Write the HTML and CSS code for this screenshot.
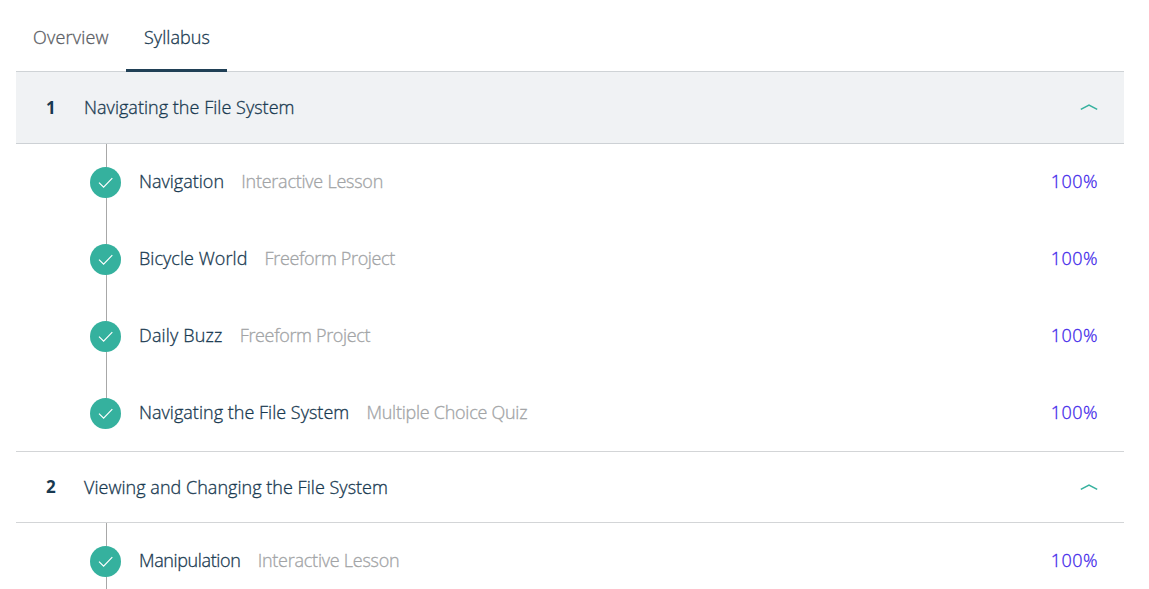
FILE: index.html
```html
<!DOCTYPE html>
<html lang="en">
<head>
<meta charset="utf-8">
<title>Syllabus</title>
<link rel="stylesheet" href="styles.css">
</head>
<body>
<svg class="defs" width="0" height="0">
  <symbol id="check" viewBox="0 0 31 31"><path d="M9 15.600l4.600 4.500 8.700-9"/></symbol>
  <symbol id="chevron" viewBox="0 0 18 8"><path d="M.8 6.300L9 2l8.200 4.300"/></symbol>
</svg>
<main class="page">
  <nav class="tabs">
    <a class="tab tab-overview">Overview</a>
    <a class="tab tab-syllabus active">Syllabus</a>
  </nav>
  <section class="unit">
    <header class="unit-head shaded">
      <span class="num">1</span><h2 class="unit-title">Navigating the File System</h2>
      <svg class="chevron"><use href="#chevron"/></svg>
    </header>
    <ul class="items">
      <li class="item"><svg class="badge"><use href="#check"/></svg><span class="name navigation">Navigation</span><span class="kind lesson">Interactive Lesson</span><span class="pct">100%</span></li>
      <li class="item"><svg class="badge"><use href="#check"/></svg><span class="name bicycle">Bicycle World</span><span class="kind project">Freeform Project</span><span class="pct">100%</span></li>
      <li class="item"><svg class="badge"><use href="#check"/></svg><span class="name buzz">Daily Buzz</span><span class="kind project">Freeform Project</span><span class="pct">100%</span></li>
      <li class="item last"><svg class="badge"><use href="#check"/></svg><span class="name files">Navigating the File System</span><span class="kind quiz">Multiple Choice Quiz</span><span class="pct">100%</span></li>
    </ul>
  </section>
  <section class="unit">
    <header class="unit-head">
      <span class="num">2</span><h2 class="unit-title">Viewing and Changing the File System</h2>
      <svg class="chevron"><use href="#chevron"/></svg>
    </header>
    <ul class="items">
      <li class="item"><svg class="badge"><use href="#check"/></svg><span class="name manipulation">Manipulation</span><span class="kind lesson">Interactive Lesson</span><span class="pct">100%</span></li>
    </ul>
  </section>
</main>
</body>
</html>
```

FILE: styles.css
```css
* { box-sizing: border-box; }
html { overflow: hidden; }
body {
  margin: 0;
  height: 589px;
  overflow: hidden;
  background: #fff;
  color: #183950;
  font: 300 18px/24px "Open Sans", "Noto Sans", sans-serif;
  white-space: nowrap;
  -webkit-text-stroke: .3px currentColor;
}
.defs { display: block; }
.page { width: 1108px; margin-left: 16px; }
.tabs {
  display: flex;
  height: 72px;
  border-bottom: 1px solid #cfd3d6;
}
.tab { height: 72px; padding-top: 25px; color: #5c6065; }
.tab-overview { width: 110px; padding-left: 17px; letter-spacing: .2px; }
.tab-syllabus { width: 101px; padding-left: 18px; letter-spacing: .05px; }
.tab.active { color: #183950; border-bottom: 3px solid #204056; }
.unit-head {
  display: flex;
  align-items: center;
  height: 71px;
  border-bottom: 1px solid #d3d5d7;
  padding: 0 26px 0 30px;
}
.unit-head.shaded { height: 72px; padding-bottom: 1px; background: #f0f2f4; border-color: #cdd1d5; }
.unit-head.shaded .num { padding-top: 2px; }
.num { width: 38px; font-size: 17px; font-weight: 700; -webkit-text-stroke: 0; }
.unit-title { margin: 0; padding-bottom: 1px; font-size: 18px; font-weight: inherit; line-height: 24px; letter-spacing: .03px; }
.chevron {
  width: 18px;
  height: 8px;
  margin-left: auto;
  fill: none;
  stroke: #35b19e;
  stroke-width: 1.5;
}
.items { margin: 0; padding: 0; list-style: none; }
.item {
  display: flex;
  align-items: center;
  height: 77px;
  padding: 0 26px 0 74px;
  background: linear-gradient(#a8a8a8, #a8a8a8) 90px 0 / 1px 100% no-repeat;
}
.item.last {
  padding-top: 1px;
  border-bottom: 1px solid #d3d5d7;
  background-size: 1px 38px;
}
.badge {
  flex: none;
  width: 31px;
  height: 31px;
  margin-right: 18px;
  border-radius: 50%;
  background: #35b19e;
  fill: none;
  stroke: #fff;
  stroke-width: 1.2;
}
.name, .kind, .pct { padding-bottom: 3px; }
.name { margin-right: 17.2px; }
.navigation { letter-spacing: 0; }
.bicycle { letter-spacing: .05px; }
.buzz { letter-spacing: .17px; }
.files { letter-spacing: .02px; }
.manipulation { letter-spacing: -.38px; }
.kind { color: #a2a4a6; }
.lesson { letter-spacing: -.24px; }
.project { letter-spacing: -.35px; }
.quiz { letter-spacing: -.26px; }
.pct { margin-left: auto; color: #3f28ea; letter-spacing: .5px; }
```
